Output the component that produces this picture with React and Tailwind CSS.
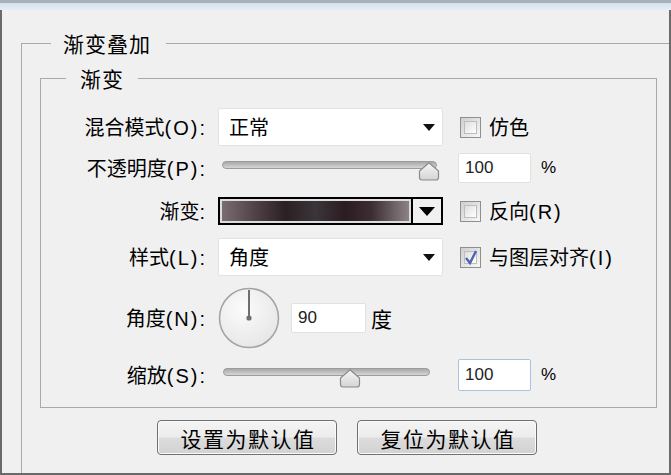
import React from 'react';

const cjk = { fontFamily: '"Noto Sans CJK SC", "Noto Sans", sans-serif' };
const latin = { fontFamily: '"Liberation Sans", Arial, sans-serif' };

// CJK part plus a wider-spaced Latin part such as "(O):"
function Mixed({ zh, en }) {
  return (
    <>
      <span style={cjk}>{zh}</span>
      {en ? (
        <span className="tracking-[2px]" style={latin}>
          {en}
        </span>
      ) : null}
    </>
  );
}

function Label({ zh, en }) {
  return (
    <div className="w-[166px] shrink-0 text-right text-[20px] leading-[24px] text-black">
      <Mixed zh={zh} en={en} />
    </div>
  );
}

function Arrow({ big }) {
  return big ? (
    <svg width="16" height="9" viewBox="0 0 16 9">
      <path d="M0 0 H16 L8 9 Z" fill="#000" />
    </svg>
  ) : (
    <svg width="12" height="7" viewBox="0 0 12 7">
      <path d="M0 0 H12 L6 7 Z" fill="#111" />
    </svg>
  );
}

function Select({ value }) {
  return (
    <div className="flex h-[38px] w-[225px] items-center rounded-[2px] border border-[#e3e3e3] bg-white pl-[10px] pr-[7px]">
      <span className="flex-1 text-[20px] leading-[24px] text-black" style={cjk}>
        {value}
      </span>
      <Arrow />
    </div>
  );
}

function Checkbox({ checked, zh, en }) {
  return (
    <div className="flex items-center gap-[8px]">
      <div className="relative h-[21px] w-[21px] border border-[#8f8f8f] bg-gradient-to-br from-[#cfcfcf] to-[#f8f8f8] p-[3px]">
        <div className="h-full w-full border border-[#bdbdbd] bg-gradient-to-br from-[#dedede] to-white" />
        {checked ? (
          <svg className="absolute left-[2px] top-[1px]" width="16" height="17" viewBox="0 0 16 17">
            <path d="M3 9 L7 14 L13 2" fill="none" stroke="#4a66b0" strokeWidth="2.4" />
          </svg>
        ) : null}
      </div>
      <span className="text-[20px] leading-[24px] text-black">
        <Mixed zh={zh} en={en} />
      </span>
    </div>
  );
}

function NumberBox({ value, focused, w = 73, h = 30 }) {
  return (
    <div
      className={`flex items-center rounded-[2px] border bg-white pl-[6px] text-[17px] text-[#222] ${
        focused ? 'border-[#a9c3de]' : 'border-[#e1e1e1]'
      }`}
      style={{ ...latin, width: w, height: h }}
    >
      {value}
    </div>
  );
}

function Slider({ trackLeft, trackWidth, handleLeft }) {
  return (
    <div className="relative h-[30px] w-[225px]">
      <div
        className="absolute top-[8px] h-[8px] rounded-full border border-[#9c9c9c] bg-gradient-to-b from-[#a9a9a9] to-[#d6d6d6]"
        style={{ left: trackLeft, width: trackWidth }}
      />
      <svg className="absolute top-[9px]" style={{ left: handleLeft }} width="22" height="19" viewBox="0 0 22 19">
        <defs>
          <linearGradient id="hg" x1="0" y1="0" x2="0" y2="1">
            <stop offset="0" stopColor="#f6f6f6" />
            <stop offset="1" stopColor="#d4d4d4" />
          </linearGradient>
        </defs>
        <path d="M11 0.8 L20.5 9 V15.5 Q20.5 18 18 18 H4 Q1.5 18 1.5 15.5 V9 Z" fill="url(#hg)" stroke="#8a8a8a" strokeWidth="1.2" />
      </svg>
    </div>
  );
}

function Dial() {
  return (
    <svg width="62" height="62" viewBox="0 0 62 62">
      <defs>
        <radialGradient id="dg" cx="0.4" cy="0.35" r="0.7">
          <stop offset="0" stopColor="#fbfbfb" />
          <stop offset="1" stopColor="#e6e6e6" />
        </radialGradient>
      </defs>
      <circle cx="31" cy="31" r="29.5" fill="url(#dg)" stroke="#a3a3a3" strokeWidth="1.5" />
      <line x1="31" y1="31" x2="31" y2="3" stroke="#6e6e6e" strokeWidth="2" />
      <circle cx="31" cy="31" r="2.6" fill="#6e6e6e" />
    </svg>
  );
}

function GradientSwatch() {
  return (
    <div className="flex h-[28px] w-[225px] border-2 border-black bg-[#dcdcdc]">
      <div className="flex-1 p-[2px]">
        <div className="h-full w-full bg-[linear-gradient(to_right,#7a6d71_0%,#4f4146_18%,#2b2024_34%,#3a3539_50%,#2a1c21_66%,#3c2e33_80%,#8d8386_100%)]" />
      </div>
      <div className="flex w-[30px] items-center justify-center border-l-2 border-black bg-[#f0f0f0]">
        <Arrow big />
      </div>
    </div>
  );
}

function Button({ children }) {
  return (
    <div
      className="flex h-[35px] w-[180px] items-center justify-center rounded-[4px] border border-[#707070] bg-[linear-gradient(to_bottom,#f4f4f4_0%,#ececec_48%,#dcdcdc_52%,#d2d2d2_100%)] pl-[2px] text-[21px] leading-[24px] tracking-[1.5px] text-black shadow-[inset_0_0_0_1px_#fbfbfb]"
      style={cjk}
    >
      {children}
    </div>
  );
}

export default function App() {
  return (
    <div className="flex h-[475px] w-[671px] flex-col overflow-hidden bg-[#f0f0f0]">
      <div className="h-[10px] shrink-0 border-t-[3px] border-[#a7b1bc] bg-gradient-to-b from-[#d3e0ee] to-[#e6eef6]" />
      <div className="flex-1 overflow-hidden border-x-2 border-b-2 border-[#6a6a6a]">
        <fieldset className="ml-[19px] mt-[22px] w-[660px] border border-[#a9a9a9] pb-[40px] pt-[13px]">
          <legend className="ml-[29px] pl-[12px] pr-[15px] text-[21px] leading-[22px] tracking-[1px] text-black" style={cjk}>
            渐变叠加
          </legend>

          <fieldset className="ml-[18px] w-[617px] border border-[#a9a9a9] pb-[16px] pt-[18px]">
            <legend className="ml-[25px] px-[14px] text-[21px] leading-[22px] tracking-[1px] text-black" style={cjk}>
              渐变
            </legend>

            <div className="flex flex-col">
              <div className="flex h-[40px] items-center">
                <Label zh="混合模式" en="(O):" />
                <div className="ml-[11px]">
                  <Select value="正常" />
                </div>
                <div className="ml-[17px]">
                  <Checkbox zh="仿色" />
                </div>
              </div>

              <div className="mt-[6px] flex h-[30px] items-center">
                <Label zh="不透明度" en="(P):" />
                <div className="ml-[11px]">
                  <Slider trackLeft={4} trackWidth={215} handleLeft={200} />
                </div>
                <div className="ml-[15px]">
                  <NumberBox value="100" />
                </div>
                <span className="ml-[10px] text-[17px] text-black" style={latin}>
                  %
                </span>
              </div>

              <div className="mt-[14px] flex h-[28px] items-center">
                <Label zh="渐变" en=":" />
                <div className="ml-[11px]">
                  <GradientSwatch />
                </div>
                <div className="ml-[17px]">
                  <Checkbox zh="反向" en="(R)" />
                </div>
              </div>

              <div className="mt-[13px] flex h-[38px] items-center">
                <Label zh="样式" en="(L):" />
                <div className="ml-[11px]">
                  <Select value="角度" />
                </div>
                <div className="ml-[17px]">
                  <Checkbox checked zh="与图层对齐" en="(I)" />
                </div>
              </div>

              <div className="mt-[11px] flex h-[62px] items-center">
                <Label zh="角度" en="(N):" />
                <div className="ml-[11px] flex items-center">
                  <Dial />
                  <div className="ml-[11px]">
                    <NumberBox value="90" w={75} h={30} />
                  </div>
                  <span className="ml-[5px] text-[21px] leading-[24px] text-black" style={cjk}>
                    度
                  </span>
                </div>
              </div>

              <div className="mt-[10px] flex h-[32px] items-center">
                <Label zh="缩放" en="(S):" />
                <div className="ml-[11px]">
                  <Slider trackLeft={5} trackWidth={207} handleLeft={121} />
                </div>
                <div className="ml-[15px]">
                  <NumberBox value="100" focused h={32} />
                </div>
                <span className="ml-[10px] text-[17px] text-black" style={latin}>
                  %
                </span>
              </div>
            </div>
          </fieldset>

          <div className="ml-[135px] mt-[12px] flex gap-[20px]">
            <Button>设置为默认值</Button>
            <Button>复位为默认值</Button>
          </div>
        </fieldset>
      </div>
    </div>
  );
}
